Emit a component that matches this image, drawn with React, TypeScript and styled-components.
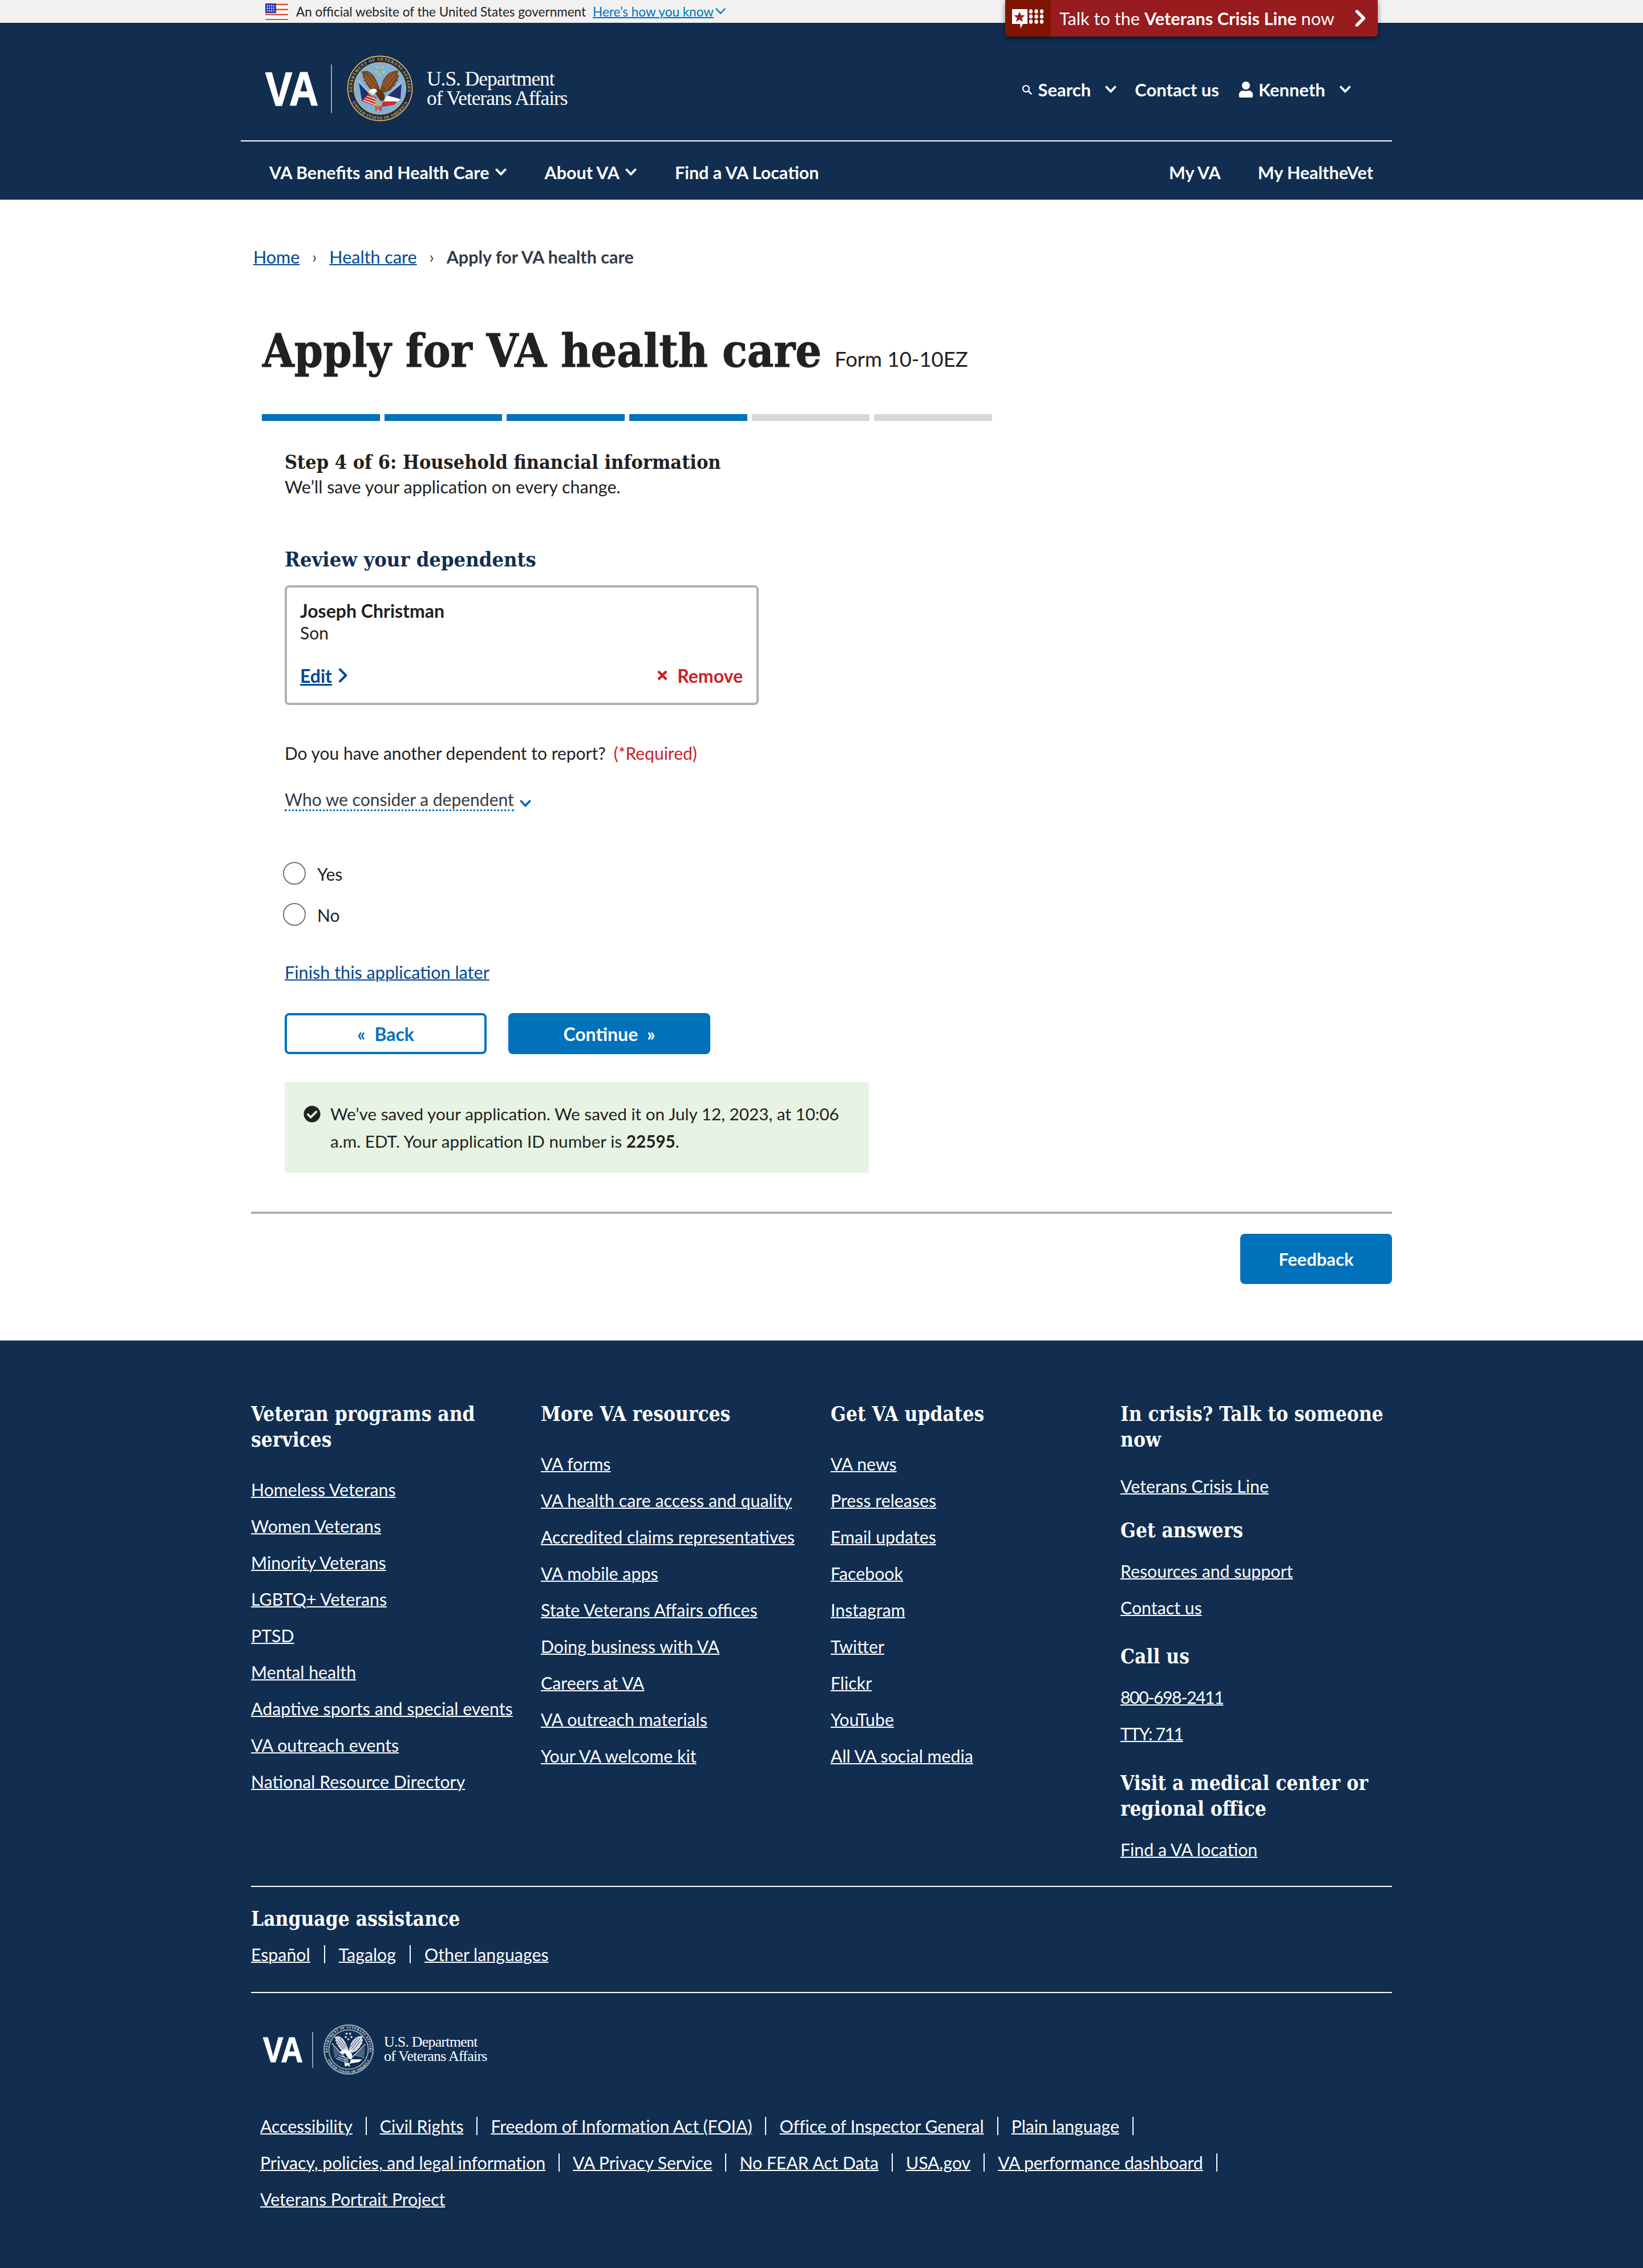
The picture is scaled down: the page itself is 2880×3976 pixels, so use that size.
import React from 'react';
import styled, { createGlobalStyle } from 'styled-components';
import { FaUser, FaCheckCircle, FaTimes } from 'react-icons/fa';

const SANS = `Lato, "Noto Sans", sans-serif`;
const SLAB = `"DejaVu Serif Condensed", "DejaVu Serif", serif`;
const NAVY = '#112e51';

const GlobalStyle = createGlobalStyle`
  html, body { margin: 0; padding: 0; background: #fff; }
  body { font-family: ${SANS}; color: #212121; font-size: 30px; }
  * { box-sizing: border-box; }
  h1, h2, h3, h4, p, ul { margin: 0; padding: 0; }
  ul { list-style: none; }
`;

const Page = styled.div`
  position: relative;
  width: 2880px;
`;

const Banner = styled.div`
  display: flex;
  align-items: center;
  height: 40px;
  padding-left: 465px;
  background: #f1f1f1;
  font-size: 22.5px;
  color: #212121;
`;

const BannerText = styled.span`
  margin-left: 14px;
`;

const BannerLink = styled.a`
  margin-left: 12px;
  color: #0071bb;
  text-decoration: underline;
  text-decoration-thickness: 2px;
`;

const BannerChevron = styled.span`
  display: flex;
  margin-left: 2px;
  color: #0071bb;
`;

const CrisisButton = styled.a`
  position: absolute;
  top: 0;
  right: 465px;
  display: flex;
  align-items: stretch;
  width: 653px;
  height: 64px;
  border-radius: 0 0 6px 6px;
  overflow: hidden;
  background: #981b1e;
  color: #fff;
  font-size: 30.7px;
  box-shadow: 0 4px 10px rgba(0, 0, 0, 0.5);
`;

const CrisisIconBox = styled.span`
  display: flex;
  align-items: center;
  justify-content: center;
  width: 80px;
  padding-top: 2px;
  background: #7f1500;
`;

const CrisisText = styled.span`
  flex: 1;
  display: flex;
  align-items: center;
  justify-content: space-between;
  padding: 0 20px 0 15px;
  white-space: pre;
`;

const Header = styled.header`
  background: ${NAVY};
  color: #fff;
  height: 310px;
  padding-left: 422px;
`;

const HeaderTop = styled.div`
  display: flex;
  justify-content: space-between;
  width: 2018px;
  height: 206px;
  padding: 57px 72px 0 43px;
`;

const LogoLink = styled.a`
  display: flex;
  align-items: center;
  height: 116px;
`;

const LogoDivider = styled.span<{ $h: number; $mx: string }>`
  display: block;
  width: 2px;
  height: ${(p) => p.$h}px;
  margin: ${(p) => p.$mx};
  background: rgba(255, 255, 255, 0.55);
`;

const LogoWords = styled.span<{ $size: number; $ml: number }>`
  margin-left: ${(p) => p.$ml}px;
  font-family: "Liberation Serif", serif;
  font-size: ${(p) => p.$size}px;
  line-height: 0.96;
  letter-spacing: -0.03em;
  white-space: nowrap;
  color: #fff;
`;

const LogoLine = styled.span`
  display: block;
`;

const UtilityNav = styled.nav`
  display: flex;
  align-items: center;
  height: 40px;
  margin-top: 40px;
  font-weight: 700;
  font-size: 31px;
`;

const UtilityItem = styled.a<{ $ml?: number }>`
  display: flex;
  align-items: center;
  margin-left: ${(p) => p.$ml ?? 0}px;
  color: #fff;
  white-space: nowrap;
`;

const UtilityLabel = styled.span<{ $ml: number }>`
  margin: 0 25px 0 ${(p) => p.$ml}px;
`;

const Rule = styled.div`
  width: 2018px;
  height: 2px;
  background: #fff;
`;

const MainNav = styled.nav`
  display: flex;
  align-items: center;
  justify-content: space-between;
  width: 2018px;
  height: 102px;
  padding: 6px 33px 0 50px;
  font-size: 30.5px;
  font-weight: 700;
`;

const NavGroup = styled.div<{ $gap: number }>`
  display: flex;
  align-items: center;
  gap: ${(p) => p.$gap}px;
`;

const NavItem = styled.a`
  display: flex;
  align-items: center;
  gap: 10px;
  color: #fff;
  white-space: nowrap;
`;

const Main = styled.main`
  width: 2000px;
  height: 2000px;
  margin-left: 440px;
  padding-top: 76px;
`;

const Breadcrumbs = styled.nav`
  display: flex;
  align-items: center;
  height: 48px;
  padding-left: 4px;
  font-size: 30.5px;
  color: #323a45;
`;

const Crumb = styled.a`
  color: #004795;
  text-decoration: underline;
  text-decoration-thickness: 2px;
`;

const CrumbSep = styled.span`
  width: 52px;
  text-align: center;
  color: #323a45;
  font-size: 28px;
`;

const CrumbCurrent = styled.span`
  font-weight: 700;
`;

const TitleRow = styled.div`
  display: flex;
  align-items: baseline;
  height: 96px;
  margin: 93px 0 63px 20px;
`;

const Title = styled.h1`
  font-family: ${SLAB};
  font-size: 80px;
  line-height: 96px;
  font-weight: 700;
  color: #212121;
  white-space: nowrap;
  -webkit-text-stroke: 1px #212121;
`;

const FormNumber = styled.span`
  margin-left: 23px;
  font-size: 36.5px;
`;

const Progress = styled.div`
  display: grid;
  grid-template-columns: repeat(6, 1fr);
  gap: 8px;
  width: 1280px;
  margin-left: 19px;
`;

const ProgressStep = styled.div<{ $done: boolean }>`
  height: 12px;
  background: ${(p) => (p.$done ? '#0071bb' : '#d6d7d9')};
`;

const FormColumn = styled.div`
  padding-left: 59px;
  width: 1083px;
`;

const StepTitle = styled.h2`
  margin-top: 50px;
  font-family: ${SLAB};
  font-size: 34px;
  line-height: 44px;
  font-weight: 700;
  color: #212121;
`;

const SaveNote = styled.p`
  font-size: 30.5px;
  line-height: 42px;
`;

const SectionTitle = styled.h3`
  margin-top: 82px;
  font-family: ${SLAB};
  font-size: 36px;
  line-height: 48px;
  font-weight: 700;
  color: ${NAVY};
`;

const DependentCard = styled.div`
  width: 831px;
  height: 210px;
  margin-top: 22px;
  padding: 22px 24px 0 23px;
  border: 4px solid #aeb0b5;
  border-radius: 8px;
`;

const DependentName = styled.div`
  font-size: 32px;
  font-weight: 700;
  line-height: 38px;
`;

const DependentRelation = styled.div`
  line-height: 38px;
`;

const CardActions = styled.div`
  display: flex;
  align-items: center;
  justify-content: space-between;
  height: 48px;
  margin-top: 32px;
  font-size: 32px;
  font-weight: 700;
`;

const EditLink = styled.a`
  display: flex;
  align-items: center;
  gap: 10px;
  color: #004795;
  span { text-decoration: underline; text-decoration-thickness: 3px; }
`;

const RemoveButton = styled.span`
  display: flex;
  align-items: center;
  gap: 14px;
  color: #cd2026;
`;

const Question = styled.p`
  margin-top: 60px;
  line-height: 48px;
`;

const Required = styled.span`
  margin-left: 14px;
  color: #cd2026;
`;

const InfoToggle = styled.div`
  display: flex;
  align-items: flex-start;
  gap: 10px;
  margin-top: 36px;
  color: #323a45;
`;

const InfoLabel = styled.span`
  height: 42px;
  line-height: 42px;
  border-bottom: 3px dotted #0071bb;
`;

const InfoChevron = styled.span`
  padding-top: 6px;
  color: #0071bb;
`;

const RadioGroup = styled.div`
  display: flex;
  flex-direction: column;
  gap: 32px;
  margin-top: 89px;
  margin-left: -3px;
`;

const RadioRow = styled.label`
  display: flex;
  align-items: center;
  gap: 20px;
  height: 40px;
`;

const RadioCircle = styled.span`
  width: 40px;
  height: 40px;
  border: 2px solid #757575;
  border-radius: 50%;
  background: #fff;
`;

const RadioLabel = styled.span`
  padding-top: 2px;
`;

const FinishLater = styled.a`
  display: block;
  margin-top: 58px;
  font-size: 30.6px;
  line-height: 48px;
  color: #004795;
  text-decoration: underline;
  text-decoration-thickness: 2px;
`;

const ButtonRow = styled.div`
  display: flex;
  gap: 38px;
  margin-top: 47px;
`;

const FormButton = styled.button<{ $outline?: boolean }>`
  width: 354px;
  height: 72px;
  border: 4px solid #0071bb;
  border-radius: 8px;
  background: ${(p) => (p.$outline ? '#fff' : '#0071bb')};
  color: ${(p) => (p.$outline ? '#0071bb' : '#fff')};
  font-family: ${SANS};
  font-size: 32px;
  font-weight: 700;
  word-spacing: 8px;
`;

const SavedAlert = styled.div`
  display: flex;
  gap: 17px;
  width: 1024px;
  height: 159px;
  margin-top: 49px;
  padding: 32px 32px 0 33px;
  background: #e7f4e4;
  font-size: 29.7px;
  line-height: 48px;
`;

const AlertIcon = styled.span`
  display: flex;
  flex: none;
  padding-top: 9px;
  color: #212121;
`;

const FeedbackBar = styled.div`
  display: flex;
  justify-content: flex-end;
  width: 2000px;
  margin-top: 68px;
  padding-top: 35px;
  border-top: 4px solid #aeb0b5;
`;

const FeedbackButton = styled.button`
  width: 266px;
  height: 88px;
  border: none;
  border-radius: 8px;
  background: #0071bb;
  color: #fff;
  font-family: ${SANS};
  font-size: 31px;
  font-weight: 700;
`;

const Footer = styled.footer`
  height: 1626px;
  padding: 106px 440px 0;
  background: ${NAVY};
  color: #fff;
  font-size: 30.3px;
`;

const FooterGrid = styled.div`
  display: grid;
  grid-template-columns: repeat(4, 508px);
  width: 2032px;
  height: 850px;
`;

const FooterHeading = styled.h4<{ $mt?: number; $mb?: number }>`
  margin-top: ${(p) => p.$mt ?? 0}px;
  margin-bottom: ${(p) => p.$mb ?? 32}px;
  font-family: ${SLAB};
  font-size: 35px;
  line-height: 45px;
  font-weight: 700;
  color: #fff;
`;

const FooterCol = styled.div`
  width: 476px;
`;

const FooterLink = styled.a<{ $tight?: boolean }>`
  color: #fff;
  text-decoration: underline;
  text-decoration-thickness: 2px;
  white-space: nowrap;
  ${(p) => (p.$tight ? 'letter-spacing: -1.5px;' : '')}
`;

const FooterItem = styled.li`
  height: 64px;
  line-height: 66px;
`;

const FooterRule = styled.div`
  height: 2px;
  background: #fff;
`;

const LanguageBlock = styled.div`
  height: 184px;
  padding-top: 33px;
`;

const InlineLinks = styled.div`
  display: flex;
  align-items: center;
  height: 64px;
`;

const LanguageLinks = styled(InlineLinks)`
  height: 48px;
`;

const Pipe = styled.span<{ $w: number }>`
  display: block;
  width: 2px;
  height: 32px;
  margin: 0 ${(p) => p.$w}px;
  background: #fff;
`;

const FooterLogo = styled.a`
  display: flex;
  align-items: center;
  height: 88px;
  margin: 55px 0 58px 21px;
`;

const LegalLinks = styled.div`
  margin-left: 16px;
  letter-spacing: -0.1px;
`;

const Chevron: React.FC<{ size?: number; dir?: 'down' | 'right'; width?: number }> = ({
  size = 20,
  dir = 'down',
  width = 4,
}) =>
  dir === 'down' ? (
    <svg width={size} height={size * 0.7} viewBox="0 0 20 14" fill="none">
      <path d="M2.5 2.5 10 10.5 17.5 2.5" stroke="currentColor" strokeWidth={width} strokeLinecap="round" strokeLinejoin="round" />
    </svg>
  ) : (
    <svg width={size * 0.7} height={size} viewBox="0 0 14 20" fill="none">
      <path d="M3 2 11 10 3 18" stroke="currentColor" strokeWidth={width} strokeLinecap="round" strokeLinejoin="round" />
    </svg>
  );

const FlagIcon = () => (
  <svg width="40" height="29" viewBox="0 0 40 29">
    <rect width="40" height="29" fill="#fff" />
    {[0, 2, 4, 6].map((i) => (
      <rect key={i} y={i * 4.4 + 0.6} width="40" height="2.6" fill="#e4502e" />
    ))}
    <rect width="19" height="17" fill="#2a3cb0" />
    {[0, 1, 2].map((r) =>
      [0, 1, 2, 3].map((c) => <rect key={`${r}${c}`} x={3 + c * 3.6} y={3 + r * 4.4} width="1.6" height="2.4" fill="#fff" />),
    )}
  </svg>
);

const CrisisIcon = () => (
  <svg width="58" height="36" viewBox="0 0 58 36">
    <path d="M1 1h27v26h-8l-4 8-1-8H1z" fill="#fff" />
    <path d="m14 5 2.6 6.6 7 .4-5.4 4.4 1.8 6.8-6-3.8-6 3.8 1.8-6.8L4.4 12l7-.4z" fill="#981b1e" />
    {[0, 1, 2].map((r) =>
      [0, 1, 2].map((c) => <ellipse key={`${r}${c}`} cx={34 + c * 9.5} cy={5 + r * 9} rx="3.2" ry="3.8" fill="#fff" />),
    )}
  </svg>
);

const SearchIcon = () => (
  <svg width="18" height="18" viewBox="0 0 18 18" fill="none">
    <circle cx="7.5" cy="7.5" r="5.5" stroke="#fff" strokeWidth="2.2" />
    <path d="m11.5 11.5 5 5" stroke="#fff" strokeWidth="2.6" strokeLinecap="round" />
  </svg>
);

// the mark is 93x60 and the box leaves room above and below for the font's line box
const VaMark: React.FC<{ w: number }> = ({ w }) => (
  <svg width={w} height={(w * 100) / 93} viewBox="0 -20 93 100">
    <text x="0" y="59.5" fontFamily="Liberation Sans, sans-serif" fontWeight="700" fontSize="83" fill="#fff" stroke="#fff" strokeWidth="1.5" textLength="93" lengthAdjust="spacingAndGlyphs">
      VA
    </text>
  </svg>
);

const STARS: [number, number][] = [[53, 21], [61, 21], [51, 29], [64, 29], [57, 34]];
const starPath = (x: number, y: number, r: number) => {
  const pts: string[] = [];
  for (let i = 0; i < 10; i++) {
    const a = -Math.PI / 2 + (i * Math.PI) / 5;
    const d = i % 2 ? r * 0.42 : r;
    pts.push(`${(x + Math.cos(a) * d).toFixed(2)},${(y + Math.sin(a) * d).toFixed(2)}`);
  }
  return `M${pts.join('L')}Z`;
};

// colour seal in the header, one colour white seal in the footer
const Seal: React.FC<{ size: number; mono?: boolean; id: string }> = ({ size, mono, id }) => {
  const gold = mono ? '#fff' : '#d9b44a';
  const red = mono ? '#fff' : '#c62f2f';
  const flag = mono ? '#48627f' : '#23306b';
  const stripe = mono ? '#fff' : '#f2f2f2';
  return (
    <svg width={size} height={size} viewBox="0 0 115 115">
      <defs>
        <path id={`${id}-top`} d="M11.7 72.4A48.2 48.2 0 1 1 103.3 72.4" />
        <path id={`${id}-bot`} d="M4.3 62.5A53.4 53.4 0 0 0 110.7 62.5" />
      </defs>
      <circle cx="57.5" cy="57.5" r="56" fill={mono ? NAVY : '#1b2a52'} stroke={gold} strokeWidth={mono ? 3 : 1.8} strokeDasharray={mono ? '1.3 1' : undefined} />
      <circle cx="57.5" cy="57.5" r="45" fill={mono ? NAVY : '#7fb2d6'} stroke={gold} strokeWidth={mono ? 2.4 : 1.4} strokeDasharray={mono ? '1.3 .9' : undefined} />
      <text fontFamily="Liberation Serif, serif" fontWeight="700" fontSize="7.2" fill={gold} letterSpacing="1">
        <textPath href={`#${id}-top`} startOffset="50%" textAnchor="middle">DEPARTMENT OF VETERANS AFFAIRS</textPath>
      </text>
      <text fontFamily="Liberation Serif, serif" fontWeight="700" fontSize="7.2" fill={gold} letterSpacing=".6">
        <textPath href={`#${id}-bot`} startOffset="50%" textAnchor="middle">UNITED STATES OF AMERICA</textPath>
      </text>
      {STARS.map(([x, y]) => (
        <path key={`${x}${y}`} d={starPath(x, y, 3.4)} fill={mono ? '#fff' : '#e6c24a'} />
      ))}
      {/* flags */}
      <path d="M21 48 38 66 38 68 26 78z" fill={flag} />
      <path d="M95 50 93 76 70 70z" fill={flag} />
      <path d="M38 67 51 73 50 88 25 79z" fill={mono ? NAVY : red} />
      <path d="M35 71 50 76M32 75 50 81M29 78 50 86" stroke={stripe} strokeWidth="1.5" fill="none" />
      <path d="M70 70 93 76 88 81 63 80z" fill={mono ? NAVY : '#fff'} stroke={mono ? '#fff' : 'none'} strokeWidth=".6" />
      <path d="M63 80 88 80 82 86 60 90z" fill={red} />
      <path d="M48 88 60 89 60 98 55 93 50 97z" fill={red} />
      <path d="M19 43 48 75M96 45 66 75" stroke={mono ? '#fff' : '#e8e8e8'} strokeWidth={mono ? 1.6 : 0.9} />
      {/* wings */}
      <path d="M25 28 36 27 42 31 47 36 51 43 55 52 58 61 50 64 43 60 38 56 36 52 33 50 33 46 29 44 30 40 27 38 28 34z" fill={mono ? '#d8dee6' : '#7a4620'} />
      <path d="M90 26 88 33 91 36 88 41 89 44 85 47 84 52 80 55 76 60 66 65 58 61 60 52 63 43 68 36 74 30 82 27z" fill={mono ? '#d8dee6' : '#7a4620'} />
      <path d="M32 33 49 55M37 31 52 52M31 39 46 57M84 31 64 56M78 31 61 53M85 38 68 59" stroke={mono ? NAVY : '#a9703a'} strokeWidth="1.3" fill="none" />
      {/* body, head, beak */}
      <path d="M48 60C54 58 60 60 63 64 66 68 67 73 65 78L60 80 56 76 52 70C50 66 48 64 46 62z" fill={mono ? '#fff' : '#5f3418'} />
      <path d="M38 65C38 61 42 58 47 58 51 58 53 61 52 64 49 65 47 67 45 69 44 67 42 66 38 65z" fill="#fff" />
      <path d="M37 65l5-2v3z" fill={mono ? '#fff' : '#e6b93c'} />
      {/* tassels */}
      <path d="M50 76 49 94M52.5 76 52.5 96M55 76 56 94" stroke={gold} strokeWidth="1.2" />
    </svg>
  );
};

const LINKS_1 = ['Homeless Veterans', 'Women Veterans', 'Minority Veterans', 'LGBTQ+ Veterans', 'PTSD', 'Mental health', 'Adaptive sports and special events', 'VA outreach events', 'National Resource Directory'];
const LINKS_2 = ['VA forms', 'VA health care access and quality', 'Accredited claims representatives', 'VA mobile apps', 'State Veterans Affairs offices', 'Doing business with VA', 'Careers at VA', 'VA outreach materials', 'Your VA welcome kit'];
const LINKS_3 = ['VA news', 'Press releases', 'Email updates', 'Facebook', 'Instagram', 'Twitter', 'Flickr', 'YouTube', 'All VA social media'];
const LEGAL = [
  ['Accessibility', 'Civil Rights', 'Freedom of Information Act (FOIA)', 'Office of Inspector General', 'Plain language'],
  ['Privacy, policies, and legal information', 'VA Privacy Service', 'No FEAR Act Data', 'USA.gov', 'VA performance dashboard'],
  ['Veterans Portrait Project'],
];

const LinkList: React.FC<{ items: string[]; tight?: boolean }> = ({ items, tight }) => (
  <ul>
    {items.map((t) => (
      <FooterItem key={t}>
        <FooterLink $tight={tight}>{t}</FooterLink>
      </FooterItem>
    ))}
  </ul>
);

const App: React.FC = () => (
  <Page>
    <GlobalStyle />
    <Banner>
      <FlagIcon />
      <BannerText>An official website of the United States government</BannerText>
      <BannerLink>Here’s how you know</BannerLink>
      <BannerChevron>
        <Chevron size={20} width={2.4} />
      </BannerChevron>
    </Banner>
    <CrisisButton>
      <CrisisIconBox>
        <CrisisIcon />
      </CrisisIconBox>
      <CrisisText>
        <span>
          Talk to the <b>Veterans Crisis Line</b> now
        </span>
        <Chevron dir="right" size={30} width={3.6} />
      </CrisisText>
    </CrisisButton>

    <Header>
      <HeaderTop>
        <LogoLink>
          <VaMark w={93} />
          <LogoDivider $h={85} $mx="0 26px 0 22px" />
          <Seal size={116} id="top-seal" />
          <LogoWords $size={35.5} $ml={24}>
            <LogoLine>U.S. Department</LogoLine>
            <LogoLine>of Veterans Affairs</LogoLine>
          </LogoWords>
        </LogoLink>
        <UtilityNav>
          <UtilityItem>
            <SearchIcon />
            <UtilityLabel $ml={11}>Search</UtilityLabel>
            <Chevron />
          </UtilityItem>
          <UtilityItem $ml={32}>Contact us</UtilityItem>
          <UtilityItem $ml={33}>
            <FaUser size={28} />
            <UtilityLabel $ml={8}>Kenneth</UtilityLabel>
            <Chevron />
          </UtilityItem>
        </UtilityNav>
      </HeaderTop>
      <Rule />
      <MainNav>
        <NavGroup $gap={67}>
          <NavItem>
            VA Benefits and Health Care <Chevron />
          </NavItem>
          <NavItem>
            About VA <Chevron />
          </NavItem>
          <NavItem>Find a VA Location</NavItem>
        </NavGroup>
        <NavGroup $gap={65}>
          <NavItem>My VA</NavItem>
          <NavItem>My HealtheVet</NavItem>
        </NavGroup>
      </MainNav>
    </Header>

    <Main>
      <Breadcrumbs>
        <Crumb>Home</Crumb>
        <CrumbSep>›</CrumbSep>
        <Crumb>Health care</Crumb>
        <CrumbSep>›</CrumbSep>
        <CrumbCurrent>Apply for VA health care</CrumbCurrent>
      </Breadcrumbs>
      <TitleRow>
        <Title>Apply for VA health care</Title>
        <FormNumber>Form 10-10EZ</FormNumber>
      </TitleRow>
      <Progress>
        {[1, 2, 3, 4, 5, 6].map((n) => (
          <ProgressStep key={n} $done={n <= 4} />
        ))}
      </Progress>
      <FormColumn>
        <StepTitle>Step 4 of 6: Household financial information</StepTitle>
        <SaveNote>We’ll save your application on every change.</SaveNote>
        <SectionTitle>Review your dependents</SectionTitle>
        <DependentCard>
          <DependentName>Joseph Christman</DependentName>
          <DependentRelation>Son</DependentRelation>
          <CardActions>
            <EditLink>
              <span>Edit</span>
              <Chevron dir="right" size={26} width={3.2} />
            </EditLink>
            <RemoveButton>
              <FaTimes size={24} />
              Remove
            </RemoveButton>
          </CardActions>
        </DependentCard>
        <Question>
          Do you have another dependent to report?
          <Required>(*Required)</Required>
        </Question>
        <InfoToggle>
          <InfoLabel>Who we consider a dependent</InfoLabel>
          <InfoChevron>
            <Chevron />
          </InfoChevron>
        </InfoToggle>
        <RadioGroup>
          <RadioRow>
            <RadioCircle />
            <RadioLabel>Yes</RadioLabel>
          </RadioRow>
          <RadioRow>
            <RadioCircle />
            <RadioLabel>No</RadioLabel>
          </RadioRow>
        </RadioGroup>
        <FinishLater>Finish this application later</FinishLater>
        <ButtonRow>
          <FormButton $outline>« Back</FormButton>
          <FormButton>Continue »</FormButton>
        </ButtonRow>
        <SavedAlert>
          <AlertIcon>
            <FaCheckCircle size={30} />
          </AlertIcon>
          <span>
            We’ve saved your application. We saved it on July 12, 2023, at 10:06 a.m. EDT. Your application ID number is <b>22595</b>.
          </span>
        </SavedAlert>
      </FormColumn>
      <FeedbackBar>
        <FeedbackButton>Feedback</FeedbackButton>
      </FeedbackBar>
    </Main>

    <Footer>
      <FooterGrid>
        <FooterCol>
          <FooterHeading>Veteran programs and services</FooterHeading>
          <LinkList items={LINKS_1} />
        </FooterCol>
        <FooterCol>
          <FooterHeading>More VA resources</FooterHeading>
          <LinkList items={LINKS_2} />
        </FooterCol>
        <FooterCol>
          <FooterHeading>Get VA updates</FooterHeading>
          <LinkList items={LINKS_3} />
        </FooterCol>
        <FooterCol>
          <FooterHeading $mb={26}>In crisis? Talk to someone now</FooterHeading>
          <LinkList items={['Veterans Crisis Line']} />
          <FooterHeading $mt={24} $mb={16}>Get answers</FooterHeading>
          <LinkList items={['Resources and support', 'Contact us']} />
          <FooterHeading $mt={32} $mb={16}>Call us</FooterHeading>
          <LinkList tight items={['800-698-2411', 'TTY: 711']} />
          <FooterHeading $mt={33} $mb={16}>Visit a medical center or regional office</FooterHeading>
          <LinkList items={['Find a VA location']} />
        </FooterCol>
      </FooterGrid>
      <FooterRule />
      <LanguageBlock>
        <FooterHeading $mb={16}>Language assistance</FooterHeading>
        <LanguageLinks>
          <FooterLink>Español</FooterLink>
          <Pipe $w={24} />
          <FooterLink>Tagalog</FooterLink>
          <Pipe $w={24} />
          <FooterLink>Other languages</FooterLink>
        </LanguageLinks>
      </LanguageBlock>
      <FooterRule />
      <FooterLogo>
        <VaMark w={70} />
        <LogoDivider $h={63} $mx="0 18px 0 16px" />
        <Seal size={88} mono id="foot-seal" />
        <LogoWords $size={26} $ml={18}>
          <LogoLine>U.S. Department</LogoLine>
          <LogoLine>of Veterans Affairs</LogoLine>
        </LogoWords>
      </FooterLogo>
      <LegalLinks>
        {LEGAL.map((row, r) => (
          <InlineLinks key={r}>
            {row.map((t, i) => (
              <React.Fragment key={t}>
                <FooterLink>{t}</FooterLink>
                {(i < row.length - 1 || r < 2) && <Pipe $w={23} />}
              </React.Fragment>
            ))}
          </InlineLinks>
        ))}
      </LegalLinks>
    </Footer>
  </Page>
);

export default App;
